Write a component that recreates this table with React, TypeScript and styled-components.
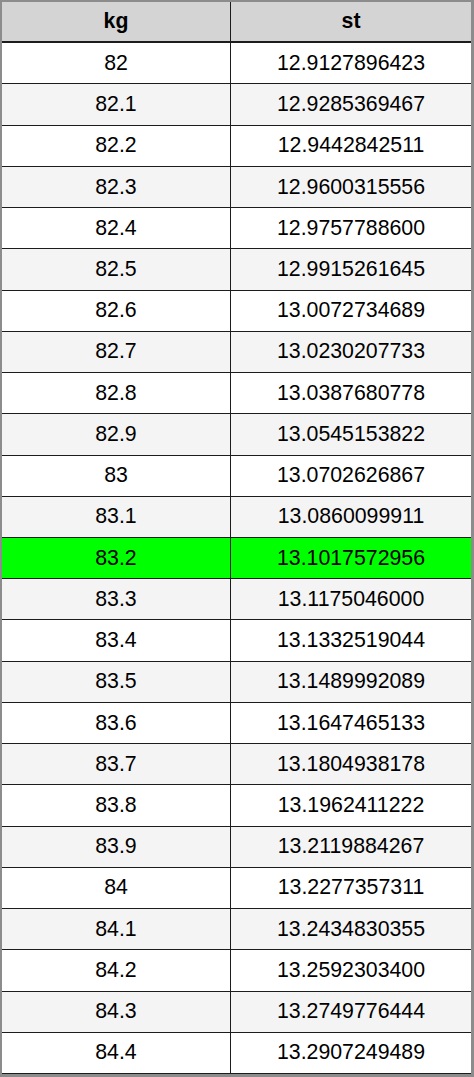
import styled, { createGlobalStyle, css } from 'styled-components';

const GlobalStyle = createGlobalStyle`
  html, body {
    margin: 0;
    padding: 0;
    background: #ffffff;
  }
  body {
    font-family: 'Liberation Sans', Arial, sans-serif;
  }
`;

const KG_PER_STONE = 6.35029318;

const rows = Array.from({ length: 25 }, (_, i) => {
  const kg = Math.round((82 + i * 0.1) * 10) / 10;
  return { kg, st: (kg / KG_PER_STONE).toFixed(10) };
});

const Table = styled.div`
  box-sizing: border-box;
  width: 474px;
  height: 1077px;
  display: grid;
  grid-template-rows: repeat(26, 1fr);
  border-top: 2px solid #8c8c8c;
  border-left: 2px solid #8c8c8c;
  border-right: 3px solid #8c8c8c;
  border-bottom: 3px solid #8c8c8c;
`;

type RowKind = 'header' | 'even' | 'odd' | 'highlight';

const rowBackground: Record<RowKind, string> = {
  header: '#d4d4d4',
  even: '#ffffff',
  odd: '#f4f4f4',
  highlight: '#00ff00',
};

const Row = styled.div<{ $kind: RowKind }>`
  display: grid;
  grid-template-columns: 229px 1fr;
  background: ${({ $kind }) => rowBackground[$kind]};
  border-bottom: 1px solid #1c1c1c;
  ${({ $kind }) =>
    $kind === 'header' &&
    css`
      border-bottom-width: 2px;
      font-weight: bold;
    `};
`;

const Cell = styled.div`
  display: flex;
  align-items: center;
  justify-content: center;
  font-size: 21.3px;
  color: #000000;
  border-right: 1px solid #1c1c1c;

  &:last-child {
    border-right: none;
  }
`;

export default function App() {
  return (
    <>
      <GlobalStyle />
      <Table>
        <Row $kind="header">
          <Cell>kg</Cell>
          <Cell>st</Cell>
        </Row>
        {rows.map((row, i) => (
          <Row key={row.kg} $kind={row.kg === 83.2 ? 'highlight' : i % 2 ? 'odd' : 'even'}>
            <Cell>{row.kg}</Cell>
            <Cell>{row.st}</Cell>
          </Row>
        ))}
      </Table>
    </>
  );
}
